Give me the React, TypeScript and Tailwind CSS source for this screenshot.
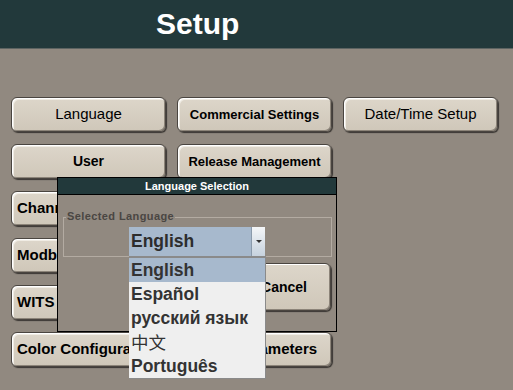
import React from "react";

const btn =
  "h-[35px] rounded-[6px] border border-[#4a4540] bg-gradient-to-b from-[#ddd6ca] to-[#cfc7b9] text-black shadow-[inset_1px_1px_0_#ffffff,inset_2px_2px_0_#f0ece4,inset_-1px_-1px_0_#8c8479,1px_1px_1px_#3a3632] flex items-center overflow-hidden whitespace-nowrap";

function SetupButton({
  label,
  size,
  bold = true,
  left = false,
  className = "",
}: {
  label: string;
  size: string;
  bold?: boolean;
  left?: boolean;
  className?: string;
}) {
  return (
    <div
      className={`${btn} ${left ? "justify-start pl-[5px]" : "justify-center"} ${
        bold ? "font-bold" : "font-normal"
      } ${size} ${className}`}
    >
      {label}
    </div>
  );
}

const languages = ["English", "Español", "русский язык", "中文", "Português"];

export default function App() {
  return (
    <div
      className="relative w-[513px] h-[390px] overflow-hidden bg-[#918980]"
      style={{ fontFamily: '"Liberation Sans", Arial, sans-serif' }}
    >
      <header className="h-[49px] bg-[#22393b] border-b border-[#5d6462] flex items-center pl-[156px]">
        <h1 className="text-white font-bold text-[30px] leading-none">Setup</h1>
      </header>

      <div className="pt-[48px] pl-[11px] grid grid-cols-[155px_155px_155px] gap-x-[11px] gap-y-[12px]">
        <SetupButton label="Language" size="text-[15px]" bold={false} />
        <SetupButton label="Commercial Settings" size="text-[13px]" />
        <SetupButton label="Date/Time Setup" size="text-[15px]" bold={false} />

        <SetupButton label="User" size="text-[14px]" />
        <SetupButton label="Release Management" size="text-[13px]" />
        <div />

        <SetupButton label="Channel Configuration" size="text-[15px]" left />
        <SetupButton label="Alarms" size="text-[14px]" />
        <div />

        <SetupButton label="Modbus Settings" size="text-[15px]" left />
        <SetupButton label="Network" size="text-[14px]" />
        <div />

        <SetupButton label="WITS Settings" size="text-[15px]" left />
        <SetupButton label="Units" size="text-[14px]" />
        <div />

        <SetupButton
          label="Color Configuration & Display Parameters"
          size="text-[15px]"
          left
          className="col-span-2"
        />
      </div>

      {/* Language selection dialog */}
      <div className="absolute left-[57px] top-[177px] w-[280px] h-[155px] border border-black bg-[#918980]">
        <div className="h-[17px] bg-[#22393b] border-b border-black flex items-center justify-center text-white font-bold text-[11px]">
          Language Selection
        </div>

        <div className="relative mt-[22px] ml-[5px] w-[269px] h-[40px] border border-[#b3aba2]">
          <span className="absolute left-[2px] -top-[7px] bg-[#918980] px-[1px] text-[11px] tracking-[0.4px] font-bold text-[#4a4643] leading-none">
            Selected Language
          </span>
          <div className="absolute left-[65px] top-[9px] w-[136px] h-[29px] bg-[#a7b9cd] flex items-center">
            <span className="flex-1 pl-[2px] text-[17.5px] font-bold text-[#2d2d2d]">English</span>
            <div className="w-[14px] h-full bg-gradient-to-b from-[#f4f6f8] to-[#c6d2de] border-l border-[#8a9aab] flex items-center justify-center">
              <div className="w-0 h-0 border-l-[3px] border-r-[3px] border-t-[3px] border-l-transparent border-r-transparent border-t-[#333]" />
            </div>
          </div>
        </div>

        <div className="absolute right-[5px] top-[85px] w-[120px] h-[48px] rounded-[6px] border border-[#4a4540] bg-gradient-to-b from-[#ddd6ca] to-[#cfc7b9] shadow-[inset_1px_1px_0_#ffffff,inset_-1px_-1px_0_#8c8479,1px_1px_1px_#3a3632] flex items-center justify-end pr-[23px] font-bold text-[14px] text-black">
          Cancel
        </div>
      </div>

      {/* Dropdown list */}
      <div className="absolute left-[129px] top-[256px] w-[137px] h-[123px] bg-[#efefef] border-t-2 border-[#1e1e1e] border-b border-[#8a8a8a] border-r border-r-[#8a8a8a]">
        {languages.map((lang, i) => (
          <div
            key={lang}
            className={`h-[24px] flex items-center pl-[2px] text-[17.5px] text-[#333] ${
              i === 0 ? "bg-[#a7b9cd]" : ""
            } ${lang === "中文" ? "font-normal" : "font-bold"}`}
            style={
              lang === "中文"
                ? { fontFamily: '"Noto Sans CJK SC", "Liberation Sans", sans-serif' }
                : undefined
            }
          >
            {lang}
          </div>
        ))}
      </div>
    </div>
  );
}
